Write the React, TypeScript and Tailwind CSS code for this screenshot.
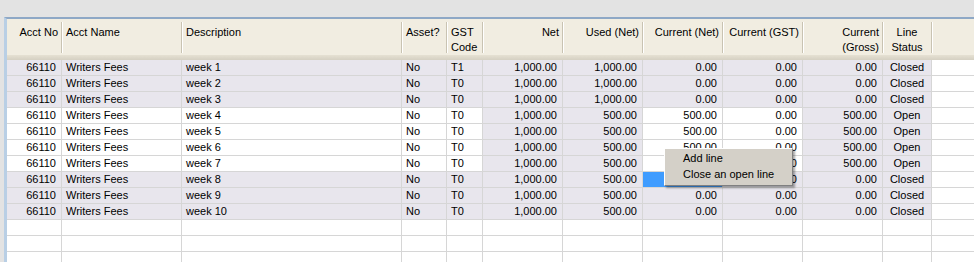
import React from 'react';

const cols = 'grid grid-cols-[55px_120px_220px_45px_36px_80px_80px_80px_80px_80px_49px_1fr]';

type Row = {
  week: number;
  gst: string;
  used: string;
  curNet: string;
  gross: string;
  open: boolean;
};

const rows: Row[] = Array.from({ length: 10 }, (_, i) => {
  const n = i + 1;
  const open = n >= 4 && n <= 7;
  return {
    week: n,
    gst: n === 1 ? 'T1' : 'T0',
    used: n <= 3 ? '1,000.00' : '500.00',
    curNet: open ? '500.00' : '0.00',
    gross: open ? '500.00' : '0.00',
    open,
  };
});

const GRAY = 'bg-[#e8e6ed]';

function Cell({
  children,
  align = 'left',
  bg = '',
  last = false,
}: {
  children?: React.ReactNode;
  align?: 'left' | 'right' | 'center';
  bg?: string;
  last?: boolean;
}) {
  const a = align === 'right' ? 'text-right pr-[5px]' : align === 'center' ? 'text-center' : 'text-left pl-[4px]';
  return (
    <div
      className={`h-[16px] leading-[15px] border-b border-[#d6d6d6] ${last ? '' : 'border-r'} ${a} ${bg} overflow-hidden whitespace-nowrap`}
    >
      {children}
    </div>
  );
}

function Head({ children, align = 'left', last = false }: { children?: React.ReactNode; align?: 'left' | 'right' | 'center'; last?: boolean }) {
  const a = align === 'right' ? 'text-right pr-[3px]' : align === 'center' ? 'text-center' : 'text-left pl-[4px]';
  return (
    <div
      className={`mt-[3px] h-[31px] pt-[3px] leading-[15px] overflow-hidden ${a} ${
        last ? '' : 'border-r border-[#c9c3b2] shadow-[1px_0_0_#ffffff]'
      }`}
    >
      {children}
    </div>
  );
}

export default function App() {
  return (
    <div className="relative w-[974px] h-[262px] overflow-hidden bg-[#e3e3e3] pt-[17px] pl-[4px] font-['Liberation_Sans',Arial,sans-serif] text-[11px] text-black">
      <div className="h-full border-t-2 border-l-[3px] border-t-[#8ea8c6] border-l-[#b9cfe5] bg-white">
        {/* header */}
        <div className={`${cols} h-[36px] bg-[#f1ede1]`}>
          <Head align="right">Acct No</Head>
          <Head>Acct Name</Head>
          <Head>Description</Head>
          <Head>Asset?</Head>
          <Head>
            GST
            <br />
            Code
          </Head>
          <Head align="right">Net</Head>
          <Head align="right">Used (Net)</Head>
          <Head align="right">Current (Net)</Head>
          <Head align="right">Current (GST)</Head>
          <Head align="right">
            Current
            <br />
            (Gross)
          </Head>
          <Head align="center">
            Line
            <br />
            Status
          </Head>
          <Head last />
        </div>
        <div className="h-[5px] bg-gradient-to-b from-[#e6e1d3] to-[#d5d0c2]" />

        {/* rows */}
        {rows.map((r) => {
          const base = r.open ? '' : GRAY;
          const edit = r.open ? '' : GRAY;
          const selected = r.week === 8;
          return (
            <div key={r.week} className={cols}>
              <Cell align="right" bg={base}>66110</Cell>
              <Cell bg={base}>Writers Fees</Cell>
              <Cell bg={base}>week {r.week}</Cell>
              <Cell bg={base}>No</Cell>
              <Cell bg={base}>{r.gst}</Cell>
              <Cell align="right" bg={GRAY}>1,000.00</Cell>
              <Cell align="right" bg={GRAY}>{r.used}</Cell>
              <Cell align="right" bg={selected ? 'bg-[#3f9cff] text-white' : edit}>{r.curNet}</Cell>
              <Cell align="right" bg={edit}>0.00</Cell>
              <Cell align="right" bg={GRAY}>{r.gross}</Cell>
              <Cell align="center" bg={GRAY}>{r.open ? 'Open' : 'Closed'}</Cell>
              <Cell last />
            </div>
          );
        })}
        {[0, 1, 2].map((i) => (
          <div key={i} className={cols}>
            {Array.from({ length: 12 }, (_, j) => (
              <Cell key={j} last={j === 11} />
            ))}
          </div>
        ))}
      </div>

      {/* context menu */}
      <div className="absolute left-[664px] top-[148px] w-[129px] border border-t-white border-l-white border-r-[#808080] border-b-[#808080] bg-[#d4d0c8] py-[1px] shadow-[2px_2px_2px_rgba(0,0,0,0.35)]">
        <div className="h-[17px] leading-[17px] pl-[18px]">Add line</div>
        <div className="h-[17px] leading-[15px] pl-[18px]">Close an open line</div>
      </div>
    </div>
  );
}
